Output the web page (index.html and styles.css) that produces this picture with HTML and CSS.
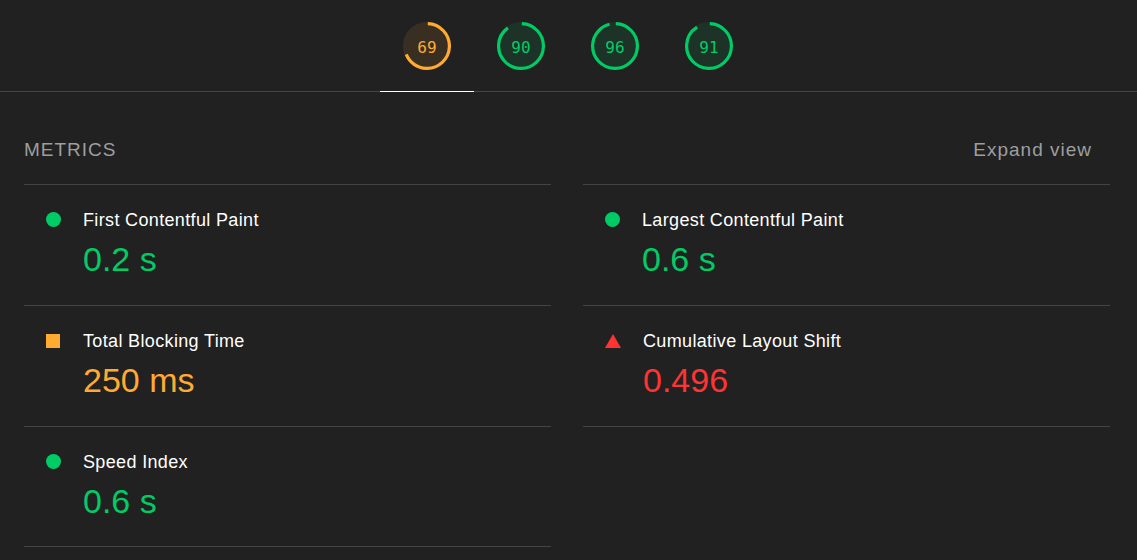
FILE: index.html
```html
<!DOCTYPE html>
<html lang="en">
<head>
<meta charset="utf-8">
<title>Lighthouse</title>
<link rel="stylesheet" href="styles.css">
</head>
<body>
<div class="tabs">
  <div class="tab active">
    <div class="gauge orange">
      <svg viewBox="0 0 120 120" width="48" height="48">
        <circle class="base" r="56" cx="60" cy="60" stroke-width="8"/>
        <circle class="arc" r="56" cx="60" cy="60" stroke-width="8" stroke-dasharray="238.78 351.86" transform="rotate(-87.95 60 60)"/>
      </svg>
      <span class="pct">69</span>
    </div>
  </div>
  <div class="tab">
    <div class="gauge green">
      <svg viewBox="0 0 120 120" width="48" height="48">
        <circle class="base" r="56" cx="60" cy="60" stroke-width="8"/>
        <circle class="arc" r="56" cx="60" cy="60" stroke-width="8" stroke-dasharray="312.67 351.86" transform="rotate(-87.95 60 60)"/>
      </svg>
      <span class="pct">90</span>
    </div>
  </div>
  <div class="tab">
    <div class="gauge green">
      <svg viewBox="0 0 120 120" width="48" height="48">
        <circle class="base" r="56" cx="60" cy="60" stroke-width="8"/>
        <circle class="arc" r="56" cx="60" cy="60" stroke-width="8" stroke-dasharray="333.78 351.86" transform="rotate(-87.95 60 60)"/>
      </svg>
      <span class="pct">96</span>
    </div>
  </div>
  <div class="tab">
    <div class="gauge green">
      <svg viewBox="0 0 120 120" width="48" height="48">
        <circle class="base" r="56" cx="60" cy="60" stroke-width="8"/>
        <circle class="arc" r="56" cx="60" cy="60" stroke-width="8" stroke-dasharray="316.19 351.86" transform="rotate(-87.95 60 60)"/>
      </svg>
      <span class="pct">91</span>
    </div>
  </div>
</div>

<section class="metrics">
  <div class="metrics-header">
    <div class="metrics-title">METRICS</div>
    <div class="expand">Expand view</div>
  </div>
  <div class="metric-grid">
    <div class="metric pass">
      <span class="icon"></span>
      <div class="body">
        <div class="title">First Contentful Paint</div>
        <div class="value">0.2 s</div>
      </div>
    </div>
    <div class="metric pass">
      <span class="icon"></span>
      <div class="body">
        <div class="title">Largest Contentful Paint</div>
        <div class="value">0.6 s</div>
      </div>
    </div>
    <div class="metric average">
      <span class="icon"></span>
      <div class="body">
        <div class="title">Total Blocking Time</div>
        <div class="value">250 ms</div>
      </div>
    </div>
    <div class="metric fail">
      <span class="icon"></span>
      <div class="body">
        <div class="title">Cumulative Layout Shift</div>
        <div class="value">0.496</div>
      </div>
    </div>
    <div class="metric pass">
      <span class="icon"></span>
      <div class="body">
        <div class="title">Speed Index</div>
        <div class="value">0.6 s</div>
      </div>
    </div>
  </div>
</section>
</body>
</html>
```
FILE: styles.css
```css
html, body {
  margin: 0;
  padding: 0;
  background: #212121;
  font-family: "Liberation Sans", Arial, sans-serif;
  color: #f5f5f5;
}

.tabs {
  display: flex;
  justify-content: center;
  border-bottom: 1px solid #444444;
  height: 91px;
  padding-right: 1px;
}

.tab {
  width: 94px;
  height: 69px;
  display: flex;
  justify-content: center;
  padding-top: 22px;
  border-bottom: 1px solid transparent;
  margin-bottom: -1px;
}

.tab.active {
  border-bottom-color: #ffffff;
}

.gauge {
  position: relative;
  width: 48px;
  height: 48px;
}

.gauge svg {
  display: block;
}

.gauge .base {
  fill: var(--c);
  stroke: var(--c);
  opacity: 0.1;
}

.gauge .arc {
  fill: none;
  stroke: var(--c);
}

.gauge .pct {
  position: absolute;
  inset: 0;
  display: flex;
  align-items: center;
  justify-content: center;
  font-family: "DejaVu Sans Mono", monospace;
  font-size: 16px;
  color: var(--c);
  padding-top: 2px;
}

.orange { --c: #ffaa33; }
.green { --c: #00cc66; }

.metrics {
  padding: 0 27px 0 24px;
}

.metrics-header {
  display: flex;
  justify-content: space-between;
  align-items: center;
  padding: 46px 0 22px;
  line-height: 24px;
  font-size: 19px;
  letter-spacing: 1px;
  color: #9e9e9e;
}

.expand {
  margin-right: 18px;
}

.metric-grid {
  display: grid;
  grid-template-columns: 1fr 1fr;
  column-gap: 32px;
}

.metric {
  display: flex;
  align-items: flex-start;
  border-bottom: 1px solid #444444;
  padding: 23px 0 26px 22px;
}

.metric:nth-child(-n+2) {
  border-top: 1px solid #444444;
}

.metric:nth-child(5) {
  padding-bottom: 25px;
}

.icon {
  width: 15px;
  height: 15px;
  margin-top: 4px;
  margin-right: 22px;
  flex: none;
}

.pass .icon {
  background: #00cc66;
  border-radius: 50%;
}

.average .icon {
  width: 14px;
  height: 14px;
  margin-top: 5px;
  margin-right: 23px;
  background: #ffaa33;
}

.fail .icon {
  width: 0;
  height: 0;
  background: none;
  border-left: 8px solid transparent;
  border-right: 8px solid transparent;
  border-bottom: 14px solid #ff3333;
  margin-top: 5px;
  margin-right: 22px;
}

.title {
  font-size: 18px;
  line-height: 24px;
  letter-spacing: 0.35px;
  color: #ffffff;
}

.value {
  margin-top: 7px;
  font-size: 34px;
  line-height: 40px;
}

.pass .value { color: #00cc66; }
.average .value { color: #ffaa33; }
.fail .value { color: #ff3333; }
```
